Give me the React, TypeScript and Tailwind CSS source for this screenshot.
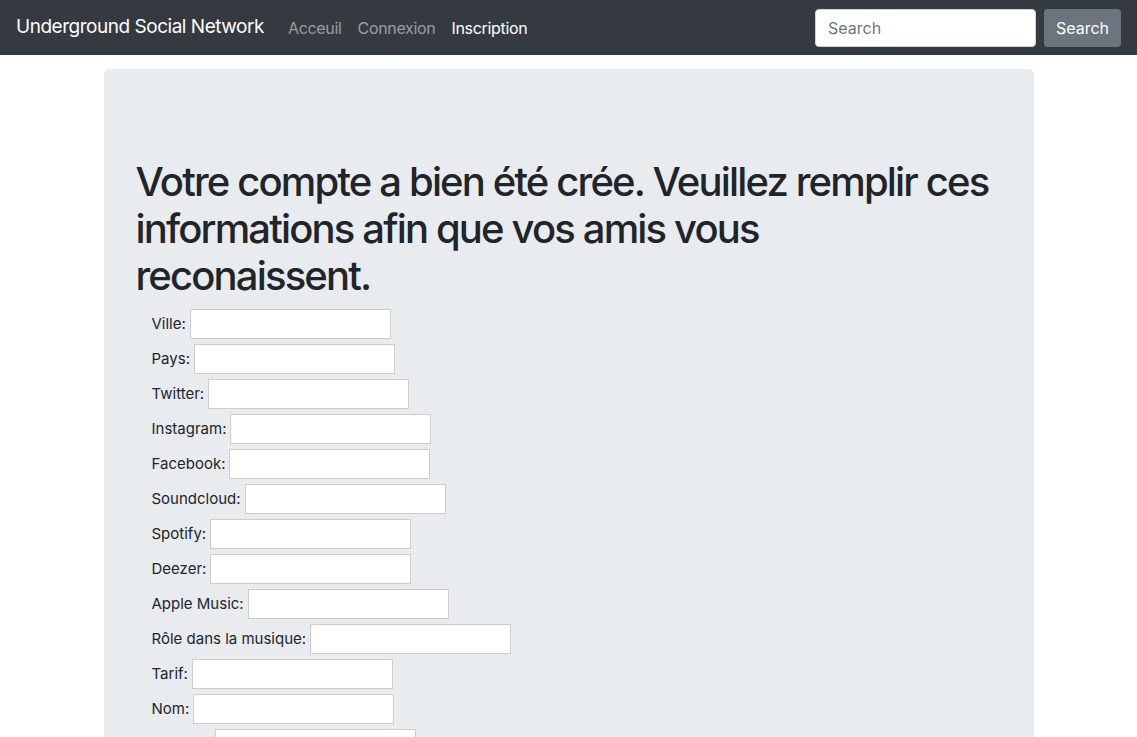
import React from "react";

const fields = [
  "Ville",
  "Pays",
  "Twitter",
  "Instagram",
  "Facebook",
  "Soundcloud",
  "Spotify",
  "Deezer",
  "Apple Music",
  "Rôle dans la musique",
  "Tarif",
  "Nom",
  "Prénom",
];

export default function App() {
  return (
    <div className="min-h-screen bg-white text-[#212529] font-['Inter','Liberation_Sans',sans-serif]">
      <nav className="flex h-[55px] items-center bg-[#343a40] px-4">
        <span className="mr-6 text-[19px] tracking-[-0.025em] text-white">Underground Social Network</span>
        <div className="flex gap-4 text-[16px] tracking-[-0.02em]">
          <a className="text-white/50">Acceuil</a>
          <a className="text-white/50">Connexion</a>
          <a className="text-white">Inscription</a>
        </div>
        <form className="ml-auto flex items-center gap-2" onSubmit={(e) => e.preventDefault()}>
          <input
            className="h-[38px] w-[221px] rounded border border-[#ced4da] bg-white px-3 text-[16px] text-[#495057] placeholder:text-[#6c757d] outline-none"
            placeholder="Search"
          />
          <button className="h-[38px] w-[77px] rounded bg-[#6c757d] text-[16px] text-white" type="submit">
            Search
          </button>
        </form>
      </nav>

      <div className="mx-auto mt-[14px] w-[930px] rounded-md bg-[#e9ecef] px-8 pt-[89px] pb-16">
        <h1 className="text-[40px] font-medium leading-[47px] tracking-[-0.046em]">
          Votre compte a bien été crée. Veuillez remplir ces
          <br />
          informations afin que vos amis vous
          <br />
          reconaissent.
        </h1>
        <form className="mt-[10px] pl-4 text-[15px]">
          {fields.map((f) => (
            <div key={f} className="mb-[5px] flex h-[30px] items-center gap-[4px]">
              <label>{f}:</label>
              <input className="h-[30px] w-[201px] border border-[#cccccc] bg-white outline-none" />
            </div>
          ))}
        </form>
      </div>
    </div>
  );
}
